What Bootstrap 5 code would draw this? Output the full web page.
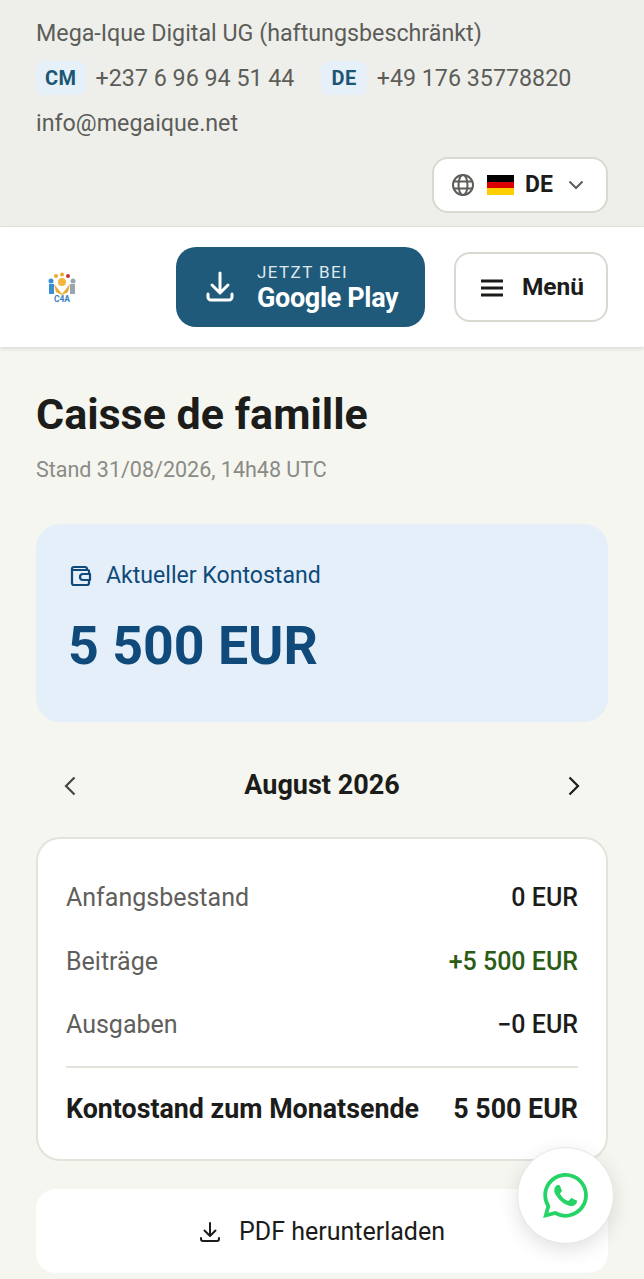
<!DOCTYPE html>
<html lang="de">
<head>
  <meta charset="UTF-8">
  <title>Caisse de famille</title>
  <link href="https://cdn.jsdelivr.net/npm/bootstrap@5.3.0/dist/css/bootstrap.min.css" rel="stylesheet">
  <style>
    body { font-family: Roboto, "Liberation Sans", sans-serif; background: #f5f6f0; color: #1c1c1a; height: 1279px; overflow: hidden; }

    .top-info { background: #eeefea; border-bottom: 1px solid #e2e3dd; height: 227px; padding: 16px 36px 0; color: #5c5d59; font-size: 23.25px; line-height: 34px; }
    .top-line { margin-bottom: 11px; }
    .phone-tag { background: #e6f0f8; color: #1d5674; font-size: 20px; font-weight: 700; line-height: 24px; padding: 5px 9px; border-radius: 8px; letter-spacing: .5px; }
    .phone-num { margin-left: 10px; }
    .phone-gap { margin-left: 27px; padding: 5px 10px; }
    .lang-row { margin-top: 17px; }
    .lang-btn { width: 176px; height: 56px; background: #fff; border: 2px solid #d9d9d2; border-radius: 16px; font-size: 23px; font-weight: 700; color: #1c1c1a; padding: 0 22px 0 17px; }
    .flag-de { width: 27px; height: 28px; margin: 0 11px 0 12px; border-radius: 3px; background: linear-gradient(#fff 14%, #000 14%, #000 38%, #d00 38%, #d00 62%, #ffce00 62%, #ffce00 86%, #fff 86%); }

    .main-bar { background: #fff; height: 120px; padding: 0 36px 0 47px; box-shadow: 0 2px 4px rgba(0,0,0,.1); position: relative; }
    .store-btn { width: 249px; height: 80px; background: #1f5a7a; color: #fff; border-radius: 20px; margin-left: auto; padding-left: 29px; gap: 22px; }
    .store-small { font-size: 17px; line-height: 20px; letter-spacing: 1.4px; color: #dfe8ee; margin-top: 2px; }
    .store-big { font-size: 27px; line-height: 32px; font-weight: 700; letter-spacing: -.35px; }
    .menu-btn { width: 154px; height: 70px; margin-left: 29px; padding: 1px 0 0 2px; background: #fff; border: 2px solid #d9d9d2; border-radius: 16px; font-size: 24.5px; font-weight: 700; color: #1c1c1a; gap: 18px; }

    .page-body { padding: 0 36px; }
    .page-title { font-size: 43px; line-height: 48px; font-weight: 700; margin: 43px 0 0; }
    .page-stamp { font-size: 21.5px; line-height: 28px; color: #8a8b86; margin: 18px 0 40px; }

    .balance-box { background: #e4eff9; border-radius: 24px; height: 198px; padding: 36px 32px 0 34px; color: #0f4a7a; }
    .balance-label { font-size: 23.1px; line-height: 30px; gap: 14px; margin-top: 1px; }
    .balance-value { font-size: 53.7px; line-height: 60px; font-weight: 700; margin: 25px 0 0 -2px; }

    .month-nav { height: 115px; padding: 12px 28px 0; font-size: 27px; font-weight: 700; }

    .sum-box { background: #fff; border: 2px solid #e3e3db; border-radius: 24px; padding: 27px 28px 11px; font-size: 25px; }
    .sum-row { height: 63.5px; }
    .sum-name { color: #5f605b; }
    .sum-amount { font-weight: 500; }
    .sum-plus { color: #2c5c14; }
    .sum-total { border-top: 2px solid #e3e3db; margin-top: 9px; height: 82px; padding-top: 4px; font-size: 26.8px; font-weight: 700; }

    .pdf-btn { background: #fff; border-radius: 20px; height: 84px; margin-top: 28px; padding-top: 2px; font-size: 25px; color: #1c1c1a; gap: 18px; }

    .wa-btn { position: fixed; left: 517px; top: 1147px; width: 97px; height: 97px; background: #fff; border: 1px solid #e6e6e0; border-radius: 50%; box-shadow: 0 6px 20px rgba(0,0,0,.12); }
  </style>
</head>
<body>
  <div class="top-info">
    <div class="top-line">Mega-Ique Digital UG (haftungsbeschränkt)</div>
    <div class="top-line d-flex align-items-center">
      <span class="phone-tag">CM</span>
      <span class="phone-num">+237 6 96 94 51 44</span>
      <span class="phone-tag phone-gap">DE</span>
      <span class="phone-num">+49 176 35778820</span>
    </div>
    <div>info@megaique.net</div>
    <div class="lang-row d-flex justify-content-end">
      <button class="lang-btn d-flex align-items-center" type="button">
        <svg width="24" height="24" viewBox="0 0 24 24" fill="none" stroke="#5c5d59" stroke-width="2"><circle cx="12" cy="12" r="10"/><ellipse cx="12" cy="12" rx="4.500" ry="10"/><path d="M2.500 8.500h19M2.500 15.500h19"/></svg>
        <span class="flag-de"></span>
        <span>DE</span>
        <svg class="ms-auto" width="16" height="10" viewBox="0 0 16 10" fill="none" stroke="#5c5d59" stroke-width="2"><path d="M1.500 1.500 8 8l6.500-6.500"/></svg>
      </button>
    </div>
  </div>

  <div class="main-bar d-flex align-items-center">
    <svg width="30" height="36" viewBox="0 0 30 36">
      <circle cx="9" cy="7" r="2" fill="#e9a82e"/><circle cx="15" cy="5.500" r="2" fill="#e9a82e"/><circle cx="21" cy="7" r="2" fill="#c9302c"/>
      <circle cx="4" cy="12" r="2.500" fill="#3a8fd0"/><circle cx="26" cy="12" r="2.500" fill="#9aa5ad"/><circle cx="15" cy="13" r="4" fill="#f4b63a"/>
      <path d="M2 15h5v10H2z" fill="#3a8fd0"/><path d="M23 15h5v10h-5z" fill="#9aa5ad"/><path d="M7 15l8 10 8-10-2 8-6 3-6-3z" fill="#e9a82e"/>
      <text x="15" y="33" font-size="8.500" font-weight="700" fill="#3a7fc0" text-anchor="middle" font-family="Roboto">C4A</text>
    </svg>
    <a class="store-btn d-flex align-items-center text-decoration-none" href="#">
      <svg width="30" height="32" viewBox="0 0 30 32" fill="none" stroke="#fff" stroke-width="3" stroke-linecap="round" stroke-linejoin="round"><path d="M15 2v20M7 14l8 8 8-8M3 23v3a3 3 0 0 0 3 3h18a3 3 0 0 0 3-3v-3"/></svg>
      <span>
        <span class="store-small d-block">JETZT BEI</span>
        <span class="store-big d-block">Google Play</span>
      </span>
    </a>
    <button class="menu-btn d-flex align-items-center justify-content-center" type="button">
      <svg width="24" height="18" viewBox="0 0 24 18" fill="none" stroke="#1c1c1a" stroke-width="3"><path d="M1 2h22M1 9h22M1 16h22"/></svg>
      <span>Menü</span>
    </button>
  </div>

  <div class="page-body">
    <h1 class="page-title">Caisse de famille</h1>
    <p class="page-stamp">Stand 31/08/2026, 14h48 UTC</p>

    <div class="balance-box">
      <div class="balance-label d-flex align-items-center">
        <svg width="22" height="22" viewBox="0 0 22 22" fill="none" stroke="#0f4a7a" stroke-width="2.200" stroke-linejoin="round"><path d="M17 5V4a2 2 0 0 0-2-2H4a2 2 0 0 0-2 2v14a2 2 0 0 0 2 2h13a2 2 0 0 0 2-2v-3M2 5h16a1 1 0 0 1 1 1v3"/><path d="M13 9h7v6h-7a3 3 0 0 1 0-6z"/></svg>
        <span>Aktueller Kontostand</span>
      </div>
      <div class="balance-value">5 500 EUR</div>
    </div>

    <div class="month-nav d-flex align-items-center justify-content-between">
      <svg width="12" height="20" viewBox="0 0 12 20" fill="none" stroke="#44453f" stroke-width="2.200"><path d="M10.500 1.500 2 10l8.500 8.500"/></svg>
      <span>August 2026</span>
      <svg width="12" height="20" viewBox="0 0 12 20" fill="none" stroke="#1c1c1a" stroke-width="2.200"><path d="M1.500 1.500 10 10l-8.500 8.500"/></svg>
    </div>

    <div class="sum-box">
      <div class="sum-row d-flex justify-content-between align-items-center"><span class="sum-name">Anfangsbestand</span><span class="sum-amount">0 EUR</span></div>
      <div class="sum-row d-flex justify-content-between align-items-center"><span class="sum-name">Beiträge</span><span class="sum-amount sum-plus">+5 500 EUR</span></div>
      <div class="sum-row d-flex justify-content-between align-items-center"><span class="sum-name">Ausgaben</span><span class="sum-amount">−0 EUR</span></div>
      <div class="sum-total d-flex justify-content-between align-items-center"><span>Kontostand zum Monatsende</span><span>5 500 EUR</span></div>
    </div>

    <a class="pdf-btn d-flex align-items-center justify-content-center text-decoration-none" href="#">
      <svg width="22" height="22" viewBox="0 0 22 22" fill="none" stroke="#1c1c1a" stroke-width="2" stroke-linecap="round" stroke-linejoin="round"><path d="M11 2v13M5.500 9.500 11 15l5.500-5.500M2 17v1a2 2 0 0 0 2 2h14a2 2 0 0 0 2-2v-1"/></svg>
      <span>PDF herunterladen</span>
    </a>
  </div>

  <a class="wa-btn d-flex align-items-center justify-content-center" href="#">
    <svg width="45" height="45" viewBox="0 0 24 24" fill="#25d366"><path d="M17.470 14.380c-.3-.15-1.760-.87-2.030-.97-.27-.1-.47-.15-.67.15-.2.3-.77.97-.94 1.160-.17.2-.35.22-.64.08-.3-.15-1.260-.46-2.390-1.480-.88-.79-1.480-1.760-1.650-2.060-.17-.3-.02-.46.13-.6.13-.14.3-.35.45-.52.15-.17.2-.3.3-.5.1-.2.05-.37-.03-.52-.07-.15-.67-1.610-.92-2.210-.24-.58-.49-.5-.67-.51h-.57c-.2 0-.52.07-.79.37-.27.3-1.040 1.020-1.040 2.480s1.060 2.880 1.210 3.070c.15.2 2.100 3.200 5.080 4.490.71.3 1.260.49 1.690.62.71.23 1.360.2 1.870.12.57-.09 1.760-.72 2.010-1.410.25-.7.25-1.290.17-1.410-.07-.13-.27-.2-.57-.35zM12.050 21.800h-.01a9.870 9.870 0 0 1-5.030-1.380l-.36-.21-3.740.98 1-3.650-.24-.37a9.860 9.860 0 0 1-1.510-5.260c0-5.450 4.440-9.880 9.890-9.880 2.640 0 5.120 1.030 6.990 2.900a9.820 9.820 0 0 1 2.890 6.990c0 5.450-4.440 9.880-9.880 9.880zM20.46 3.49A11.820 11.820 0 0 0 12.050 0C5.500 0 .16 5.340.16 11.890c0 2.100.55 4.140 1.590 5.950L.06 24l6.310-1.650a11.880 11.880 0 0 0 5.680 1.450h.01c6.550 0 11.890-5.34 11.890-11.890 0-3.180-1.240-6.160-3.490-8.410z"/></svg>
  </a>
</body>
</html>
